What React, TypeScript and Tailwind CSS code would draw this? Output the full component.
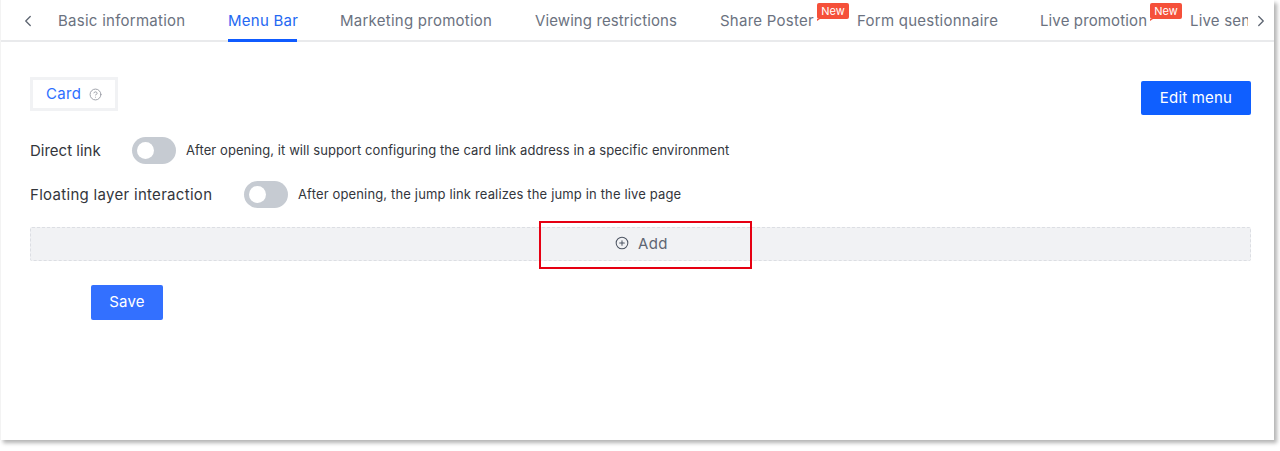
import { ChevronLeft, ChevronRight, CirclePlus, CircleHelp } from 'lucide-react'

const tabs = [
  { label: 'Basic information', width: 'w-[127px]', tracking: 'tracking-[0.26px]' },
  { label: 'Menu Bar', width: 'w-[69px]', tracking: 'tracking-[0.25px]', active: true },
  { label: 'Marketing promotion', width: 'w-[152px]', tracking: 'tracking-[0.25px]' },
  { label: 'Viewing restrictions', width: 'w-[142px]', tracking: 'tracking-[0.1px]' },
  { label: 'Share Poster', width: 'w-[94px]', tracking: 'tracking-[0.25px]', isNew: true },
  { label: 'Form questionnaire', width: 'w-[140px]', tracking: 'tracking-[0.25px]' },
  { label: 'Live promotion', width: 'w-[107px]', tracking: 'tracking-[0.13px]', isNew: true },
  { label: 'Live sending', width: 'w-[90px]', tracking: 'tracking-[0.2px]' },
]

function Toggle() {
  return (
    <div className="flex h-[27px] w-[44px] shrink-0 items-center rounded-full bg-[#c6cbd2] pl-[5px]">
      <div className="h-[17px] w-[17px] rounded-full bg-white" />
    </div>
  )
}

function SwitchRow({
  label,
  hint,
  labelClass,
  hintClass,
}: {
  label: string
  hint: string
  labelClass: string
  hintClass: string
}) {
  return (
    <div className="flex h-[27px] items-center">
      <span className={`${labelClass} shrink-0 pt-[1px] text-[15px] text-[#33363c]`}>{label}</span>
      <Toggle />
      <span className={`ml-[10px] pt-[1px] text-[13px] text-[#33363c] ${hintClass}`}>{hint}</span>
    </div>
  )
}

export default function App() {
  return (
    <div className="h-[451px] w-full bg-white font-['Inter',sans-serif]">
      <div className="h-[440px] w-[1274px] border-l border-[#f3f3f3] bg-white shadow-[3px_3px_4px_rgba(0,0,0,0.3)]">
        {/* Tabs */}
        <div className="flex h-[42px] items-stretch shadow-[inset_0_-2px_0_#e9eaec]">
          <div className="flex w-[57px] shrink-0 items-center pb-[1px] pl-[18px] text-[#5c6470]">
            <ChevronLeft size={18} strokeWidth={1.75} />
          </div>
          <div className="flex min-w-0 flex-1 gap-[43px] overflow-hidden">
            {tabs.map((tab) => (
              <div key={tab.label} className={`relative h-[42px] shrink-0 ${tab.width}`}>
                <div
                  className={`whitespace-nowrap pt-[11px] text-[15px] leading-[20px] ${tab.tracking} ${
                    tab.active ? 'text-[#2468f2]' : 'text-[#6b7280]'
                  }`}
                >
                  {tab.label}
                </div>
                {tab.active && <div className="absolute right-0 bottom-0 left-0 h-[3px] bg-[#0f5bff]" />}
                {tab.isNew && (
                  <div className="absolute top-[3px] left-[calc(100%+3px)]">
                    <div className="h-[16px] w-[32px] rounded-[2px] bg-[#f5503a] text-center text-[11px] leading-[16px] text-white">
                      New
                    </div>
                    <div className="h-0 w-0 border-t-[2px] border-r-[3px] border-t-[#f5503a] border-r-transparent" />
                  </div>
                )}
              </div>
            ))}
          </div>
          <div className="flex w-[26px] shrink-0 items-center pb-[1px] pl-[4px] text-[#5c6470]">
            <ChevronRight size={18} strokeWidth={1.75} />
          </div>
        </div>

        {/* Body */}
        <div className="relative pt-[35px] pr-[23px] pl-[29px]">
          <div className="flex items-start justify-between">
            <div className="flex h-[34px] w-[88px] items-center border-[3px] border-[#f1f2f4] pl-[13px] text-[15px] tracking-[0.3px] text-[#2e6fff]">
              Card
              <CircleHelp size={13} strokeWidth={1.75} className="ml-[8px] text-[#9a9ea6]" />
            </div>
            <button className="mt-[4px] h-[34px] w-[110px] rounded-[2px] bg-[#0f5fff] text-[15px] tracking-[0.2px] text-white">
              Edit menu
            </button>
          </div>

          <div className="mt-[22px]">
            <SwitchRow
              labelClass="w-[102px]"
              label="Direct link"
              hint="After opening, it will support configuring the card link address in a specific environment"
              hintClass="tracking-[0.07px]"
            />
          </div>
          <div className="mt-[17px]">
            <SwitchRow
              labelClass="w-[214px] tracking-[0.3px]"
              label="Floating layer interaction"
              hint="After opening, the jump link realizes the jump in the live page"
              hintClass="tracking-[0.15px]"
            />
          </div>

          <div className="mt-[19px] flex h-[34px] items-center justify-center gap-[9px] rounded-[2px] border border-dashed border-[#dcdee3] bg-[#f1f2f4] pl-[2px] text-[15px] tracking-[0.4px] text-[#5f6672]">
            <CirclePlus size={14} strokeWidth={1.75} className="-mt-[2px] text-[#4d5562]" />
            Add
          </div>

          <button className="mt-[24px] ml-[61px] block h-[35px] w-[72px] rounded-[2px] bg-[#3370ff] text-[15px] tracking-[0.2px] text-white">
            Save
          </button>

          {/* annotation box */}
          <div className="absolute top-[179px] left-[538px] h-[48px] w-[213px] border-2 border-[#e60012]" />
        </div>
      </div>
    </div>
  )
}
